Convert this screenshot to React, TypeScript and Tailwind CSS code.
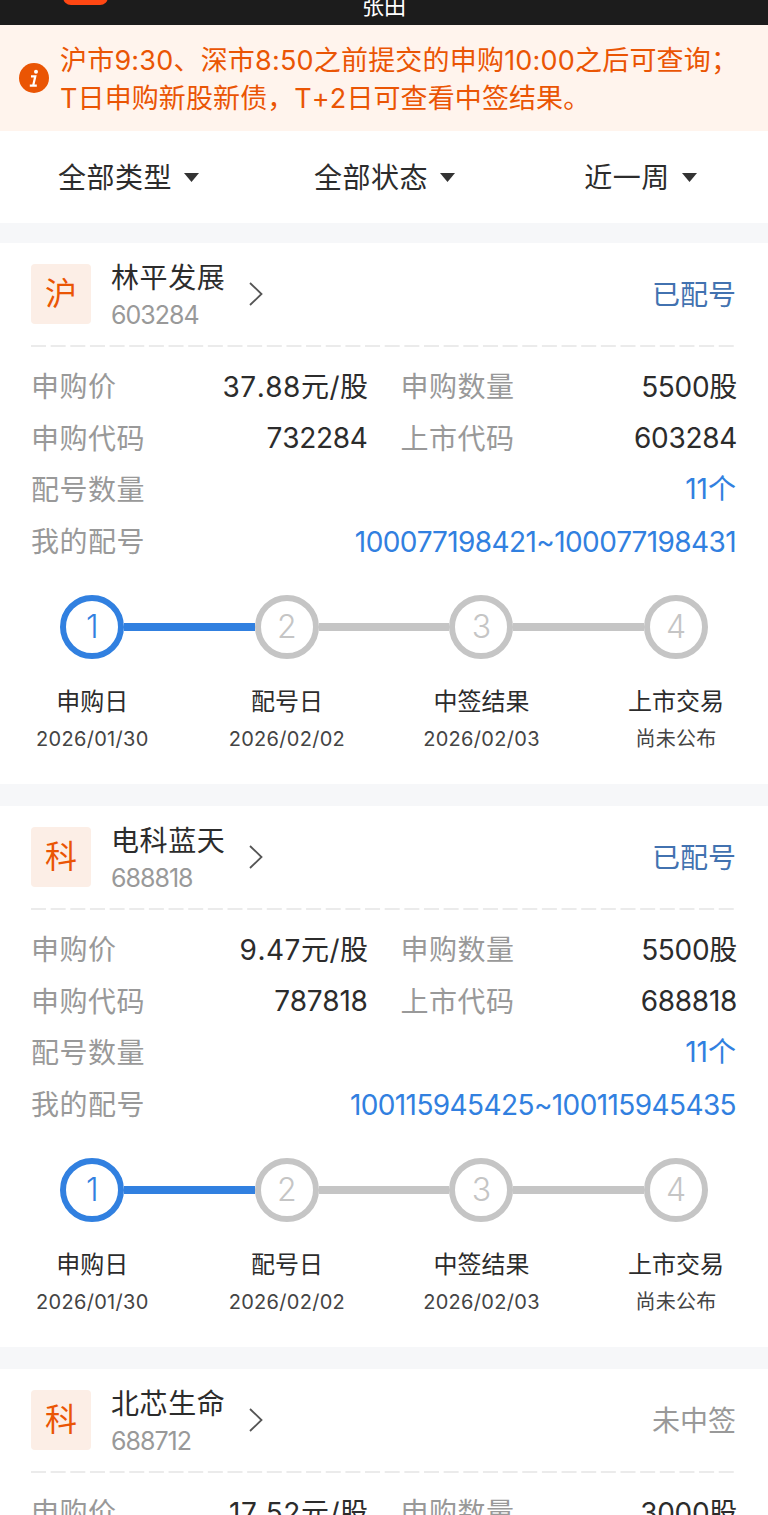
import clsx from 'clsx'

interface Step {
  label: string
  date: string
}

interface Details {
  applyCode: string
  count: string
  numbers: string
}

interface Subscription {
  market: string
  name: string
  code: string
  status: string
  won: boolean
  price: string
  amount: string
  details?: Details
}

const STEPS: Step[] = [
  { label: '申购日', date: '2026/01/30' },
  { label: '配号日', date: '2026/02/02' },
  { label: '中签结果', date: '2026/02/03' },
  { label: '上市交易', date: '尚未公布' },
]

// Number of the last step that has been reached.
const CURRENT_STEP = 1

const SUBSCRIPTIONS: Subscription[] = [
  {
    market: '沪', name: '林平发展', code: '603284', status: '已配号', won: true,
    price: '37.88元/股', amount: '5500股',
    details: { applyCode: '732284', count: '11个', numbers: '100077198421~100077198431' },
  },
  {
    market: '科', name: '电科蓝天', code: '688818', status: '已配号', won: true,
    price: '9.47元/股', amount: '5500股',
    details: { applyCode: '787818', count: '11个', numbers: '100115945425~100115945435' },
  },
  {
    market: '科', name: '北芯生命', code: '688712', status: '未中签', won: false,
    price: '17.52元/股', amount: '3000股',
  },
]

const FILTERS = ['全部类型', '全部状态', '近一周']

function Field({ label, value, className }: { label: string; value: string; className?: string }) {
  return (
    <div className="flex h-[51.5px] items-center justify-between">
      <span className="pt-px tracking-[0.5px] text-[#999]">{label}</span>
      <span className={className ?? 'tracking-[-0.3px] text-[#2c2c2c]'}>{value}</span>
    </div>
  )
}

function Progress() {
  return (
    <div className="-mx-[36px] mt-[28px] grid grid-cols-[repeat(4,194.6px)]">
      {STEPS.map((step, i) => {
        const active = i < CURRENT_STEP
        return (
          <div key={step.label} className="flex flex-col items-center">
            <div className="flex w-full items-center">
              <div className={clsx('h-2 flex-1', i > 0 && (i <= CURRENT_STEP ? 'bg-[#3180e0]' : 'bg-[#c5c5c5]'))} />
              <div className={clsx('flex size-16 items-center justify-center rounded-full border-6 text-[32px] font-[350]',
                active ? 'border-[#3180e0] text-[#3180e0]' : 'border-[#c5c5c5] text-[#c5c5c5]')}>
                {i + 1}
              </div>
              <div className={clsx('h-2 flex-1', i < STEPS.length - 1 && (active ? 'bg-[#3180e0]' : 'bg-[#c5c5c5]'))} />
            </div>
            <div className="mt-[24px] text-[24px] leading-[38px] text-[#2c2c2c]">{step.label}</div>
            <div className="text-[20px] leading-[36px] tracking-[0.3px] text-[#444]">{step.date}</div>
          </div>
        )
      })}
    </div>
  )
}

function Card({ item }: { item: Subscription }) {
  return (
    <section className="mb-[22px] h-[541px] bg-white px-[31px] pt-[21px]">
      <div className="flex h-[60px] items-center">
        <div className="flex size-[60px] items-center justify-center rounded bg-[#fceee6] text-[32px] text-[#ea5504]">{item.market}</div>
        <div className="ml-[20px] w-[138px] pt-1">
          <div className="text-[28px] leading-[38px] tracking-[0.6px] text-[#2c2c2c]">{item.name}</div>
          <div className="text-[25px] leading-[36px] tracking-[-1px] text-[#999]">{item.code}</div>
        </div>
        <svg width="14" height="24" viewBox="0 0 14 24" fill="none" stroke="#555" strokeWidth="1.8">
          <path d="M1 1l11.5 11L1 23" />
        </svg>
        <span className={clsx('mt-0.5 mr-px ml-auto text-[28px]', item.won ? 'text-[#4272b0]' : 'text-[#999]')}>{item.status}</span>
      </div>
      <svg className="mt-[21px] block" width="703" height="2">
        <path d="M0 1H703" stroke="#ebebeb" strokeWidth="2" strokeDasharray="15 4.65" />
      </svg>
      <div className="mt-[14px] text-[28px]">
        <div className="grid grid-cols-2 gap-x-[33px]">
          <Field label="申购价" value={item.price} className="-mr-px tracking-[0.5px] text-[#2c2c2c]" />
          <Field label="申购数量" value={item.amount} />
          {item.details && (
            <>
              <Field label="申购代码" value={item.details.applyCode} />
              <Field label="上市代码" value={item.code} />
            </>
          )}
        </div>
        {item.details && (
          <>
            <Field label="配号数量" value={item.details.count} className="mr-px mb-0.5 text-[#3180e0]" />
            <Field label="我的配号" value={item.details.numbers} className="mr-px pt-px tracking-[-0.6px] text-[#3180e0]" />
          </>
        )}
      </div>
      {item.details && <Progress />}
    </section>
  )
}

export default function App() {
  return (
    <div className="h-[1515px] w-[768px] overflow-hidden bg-[#f6f7f9] font-['Inter','Noto_Sans_CJK_SC',sans-serif] font-[370] [font-feature-settings:'calt'_0] [font-kerning:none]">
      <header className="relative flex h-[25px] items-end justify-center overflow-hidden bg-[#1c1c1c] text-[22px] leading-[37px] text-white">
        <span className="absolute -top-5 left-[63px] h-[25px] w-[45px] rounded-lg bg-[#ff4713]" />
        <span>张田</span>
      </header>
      <div className="flex h-[106px] items-center bg-[#fff4ed] pl-[19px]">
        <svg className="shrink-0" width="30" height="30" viewBox="0 0 30 30">
          <circle cx="15" cy="15" r="15" fill="#ea5504" />
          <circle cx="17" cy="8.7" r="2" fill="#fff" />
          <path d="M12 13.3h4.3L14.2 22.4M10.8 22.6h7" fill="none" stroke="#fff" strokeWidth="2.2" />
        </svg>
        <div className="ml-[11px] pt-[3px] text-[27px] leading-[38px] whitespace-nowrap text-[#ea5504]">
          <p className="tracking-[0.2px]">沪市9:30、深市8:50之前提交的申购10:00之后可查询；</p>
          <p className="tracking-[0.1px]">T日申购新股新债，T+2日可查看中签结果。</p>
        </div>
      </div>
      <nav className="mb-[20px] grid h-[92px] grid-cols-3 bg-white text-[28px] text-[#2c2c2c]">
        {FILTERS.map((label) => (
          <button key={label} className="flex items-center justify-center gap-3 pl-px tracking-[0.5px]">
            <span className="pt-0.5">{label}</span>
            <svg width="15" height="9" viewBox="0 0 15 9" fill="#333">
              <path d="M0 0h15L7.5 9z" />
            </svg>
          </button>
        ))}
      </nav>
      {SUBSCRIPTIONS.map((item) => (
        <Card key={item.code} item={item} />
      ))}
    </div>
  )
}
